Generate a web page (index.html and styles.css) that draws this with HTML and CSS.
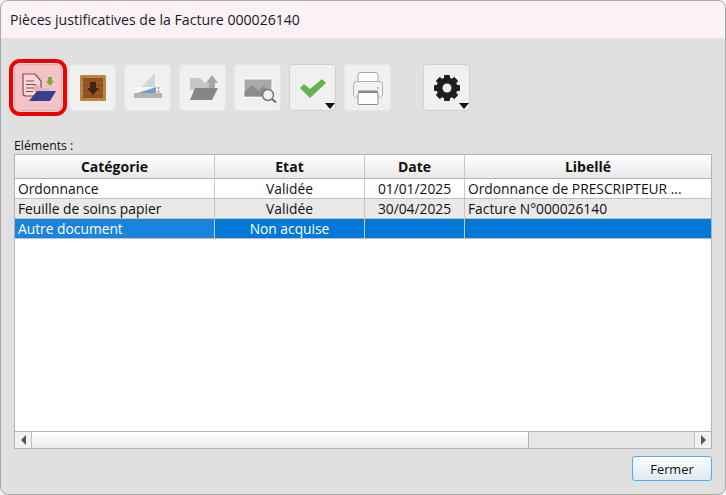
FILE: index.html
```html
<!DOCTYPE html>
<html lang="fr">
<head>
<meta charset="utf-8">
<title>Pièces justificatives</title>
<link rel="stylesheet" href="styles.css">
</head>
<body>
<div class="window">
  <header class="titlebar">Pièces justificatives de la Facture 000026140</header>
  <main class="content">
    <div class="toolbar">
      <button class="tool tool-active">
        <svg viewBox="0 0 47 47" width="47" height="47">
          <path d="M9 10h12l6 7v15H12a3 3 0 0 1-3-3z" fill="#fbd6d8" stroke="#7d4a55" stroke-width="1.2"/>
          <path d="M12 17h8M12 20.500h10M12 24h10M12 27.500h7" stroke="#7d4a55" stroke-width="1"/>
          <path d="M20 21h5l2 3h8v4H20z" fill="#e8b4b4"/>
          <path d="M23 27h19l-6 10H15z" fill="#3a3f8c"/>
          <path d="M34 13h4v4h2l-4 5-4-5h2z" fill="#82a83c"/>
        </svg>
      </button>
      <button class="tool">
        <svg viewBox="0 0 47 47" width="47" height="47">
          <rect x="11" y="11" width="26" height="26" rx="1.500" fill="#b98443"/>
          <rect x="14" y="14" width="20" height="20" fill="#8f4f1e"/>
          <path d="M14 19h20M14 24h20M14 29h20" stroke="#a3642e" stroke-width="1"/>
          <path d="M21 18h6v6h3l-6 7-6-7h3z" fill="#3f2410"/>
        </svg>
      </button>
      <button class="tool">
        <svg viewBox="0 0 47 47" width="47" height="47">
          <path d="M12 29 31 9v14z" fill="#d4d4d4"/>
          <path d="M12 25 14 23H38V34H10V27z" fill="#f6f6f6"/>
          <path d="M14 29 32 23v6z" fill="#6f9bd3"/>
          <rect x="10" y="29" width="28" height="5" fill="#b3b3b3"/>
          <rect x="33.500" y="23" width="2" height="2" fill="#7ec26b"/>
          <rect x="33.500" y="26.500" width="2" height="2" fill="#e0745c"/>
        </svg>
      </button>
      <button class="tool">
        <svg viewBox="0 0 47 47" width="47" height="47">
          <path d="M11 14h10l5 5h10v7H11z" fill="#c6c6c6"/>
          <path d="M16 24h23l-6 12H11z" fill="#858585"/>
          <path d="M27 19l6-8 6 8h-3v5h-6v-5z" fill="#a8a8a8"/>
        </svg>
      </button>
      <button class="tool">
        <svg viewBox="0 0 47 47" width="47" height="47">
          <rect x="9" y="14" width="30" height="20" fill="#fafafa"/>
          <rect x="10.500" y="15.500" width="27" height="17" fill="#a9a9a9"/>
          <path d="M10.500 32.500V28l7-7 7 6 5-5 8 7v3.500z" fill="#8c8c8c"/>
          <circle cx="34" cy="31" r="5.500" fill="#f0f0f0" stroke="#777" stroke-width="1.500"/>
          <path d="M38 35l4 3.500" stroke="#666" stroke-width="1.800"/>
        </svg>
      </button>
      <button class="tool tool-menu tool-enabled">
        <svg viewBox="0 0 47 47" width="47" height="47">
          <path d="M11 24l4-4 6 5 12-10 4 4-16 15z" fill="#62b34b"/>
        </svg>
      </button>
      <button class="tool">
        <svg viewBox="0 0 47 47" width="47" height="47">
          <rect x="14" y="8.500" width="20" height="12" rx="2" fill="#fbfbfb" stroke="#a5a5a5"/>
          <rect x="9.500" y="17.500" width="29" height="16" rx="3" fill="#f2f2f2" stroke="#b0b0b0"/>
          <rect x="14" y="28.500" width="20" height="12" rx="1" fill="#fdfdfd" stroke="#8e8e8e"/>
          <rect x="14" y="26.500" width="20" height="2" fill="#8a8a8a"/>
          <rect x="33" y="23" width="2" height="2" fill="#bdbdbd"/>
        </svg>
      </button>
      <button class="tool tool-gear tool-menu tool-enabled">
        <svg viewBox="0 0 47 47" width="47" height="47">
          <g fill="#1d1e22">
            <circle cx="24" cy="24" r="10.500"/>
            <rect x="21" y="11" width="6" height="26" rx="1"/>
            <rect x="11" y="21" width="26" height="6" rx="1"/>
            <rect x="21" y="11" width="6" height="26" rx="1" transform="rotate(45 24 24)"/>
            <rect x="11" y="21" width="26" height="6" rx="1" transform="rotate(45 24 24)"/>
          </g>
          <circle cx="24" cy="24" r="4.500" fill="#f0f0f0"/>
        </svg>
      </button>
    </div>
    <div class="list-label">Eléments :</div>
    <div class="list">
      <table class="grid">
        <colgroup>
          <col class="col-cat"><col class="col-etat"><col class="col-date"><col class="col-lib">
        </colgroup>
        <thead>
          <tr><th>Catégorie</th><th>Etat</th><th>Date</th><th>Libellé</th></tr>
        </thead>
        <tbody>
          <tr>
            <td>Ordonnance</td><td class="center">Validée</td><td class="center">01/01/2025</td><td>Ordonnance de PRESCRIPTEUR ...</td>
          </tr>
          <tr class="alt">
            <td>Feuille de soins papier</td><td class="center">Validée</td><td class="center">30/04/2025</td><td>Facture N°000026140</td>
          </tr>
          <tr class="selected">
            <td class="focus">Autre document</td><td class="center">Non acquise</td><td class="center"></td><td></td>
          </tr>
        </tbody>
      </table>
      <div class="scrollbar">
        <div class="sb-btn"><span class="arrow-left"></span></div>
        <div class="sb-thumb"></div>
        <div class="sb-track"></div>
        <div class="sb-btn sb-btn-end"><span class="arrow-right"></span></div>
      </div>
    </div>
    <div class="footer"><button class="close-btn">Fermer</button></div>
  </main>
</div>
</body>
</html>
```
FILE: styles.css
```css
* { box-sizing: border-box; }
html, body { margin: 0; height: 100%; }
body {
  background: #f4f0f4;
  font-family: "Open Sans", "Noto Sans", "Liberation Sans", sans-serif;
  font-size: 13px;
  color: #111;
  overflow: hidden;
}
.window {
  height: 495px;
  display: flex;
  flex-direction: column;
  background: #e0e0e0;
  border: 1px solid #a8a8a8;
  border-radius: 8px;
  margin: 0;
  overflow: hidden;
}
.titlebar {
  height: 37px;
  flex: none;
  background: #fbf2f7;
  padding: 9px 0 0 9px;
  font-size: 14.100px;
  line-height: 20px;
  color: #1a1a1a;
}
.content {
  flex: 1;
  display: flex;
  flex-direction: column;
  padding: 26px 13px 12px 13px;
  min-height: 0;
}
.toolbar { display: flex; gap: 8px; height: 47px; flex: none; }
.tool {
  position: relative;
  width: 47px;
  height: 47px;
  padding: 0;
  background: #f0f0f0;
  border: 1px solid #e6e6e6;
  border-radius: 4px;
  display: block;
}
.tool svg { display: block; margin: -1px; }
.tool-enabled { border-color: #cfcfcf; }
.tool-active {
  width: 48px;
  margin-right: -1px;
  background: #f5c3c5;
  border-color: #e6aeb0;
  outline: 4px solid #f00000;
  outline-offset: 1px;
  border-radius: 6px;
}
.tool-gear { margin-left: 24px; }
.tool-menu::after {
  content: "";
  position: absolute;
  right: 0;
  bottom: 1px;
  border-left: 5px solid transparent;
  border-right: 5px solid transparent;
  border-top: 6px solid #111;
}
.list-label {
  flex: none;
  margin-top: 27px;
  height: 16px;
  line-height: 16px;
  font-size: 12.300px;
}
.list {
  flex: none;
  width: 698px;
  height: 295px;
  display: flex;
  flex-direction: column;
  justify-content: space-between;
  background: #fff;
  border: 1px solid #b4b4b4;
}
.grid {
  width: 696px;
  table-layout: fixed;
  border-collapse: separate;
  border-spacing: 0;
}
.col-cat { width: 200px; }
.col-etat { width: 150px; }
.col-date { width: 100px; }
.grid th {
  height: 24px;
  padding: 0;
  font-size: 14px;
  font-weight: 700;
  text-align: center;
  background: linear-gradient(#ffffff, #e8e8e8);
  border-right: 1px solid #c8c8c8;
  border-bottom: 1px solid #b4b4b4;
}
.grid td {
  height: 20px;
  padding: 0 3px;
  font-size: 13.800px;
  line-height: 19px;
  white-space: nowrap;
  overflow: hidden;
  border-right: 1px solid #c8c8c8;
  border-bottom: 1px solid #c0c0c0;
}
.grid th:last-child, .grid td:last-child { border-right: 0; }
.grid .center { text-align: center; }
.alt td { background: #e9e9e9; }
.selected td { background: #0078d7; color: #fff; }
.selected .focus { background: #1a84dd; }
.scrollbar {
  height: 17px;
  display: flex;
  background: #e6e6e6;
  border-top: 1px solid #b4b4b4;
  flex: none;
}
.sb-btn {
  width: 17px;
  flex: none;
  display: flex;
  align-items: center;
  justify-content: center;
  background: #f2f2f2;
  border-right: 1px solid #c0c0c0;
}
.sb-btn-end { border-right: 0; border-left: 1px solid #c0c0c0; }
.sb-thumb {
  width: 497px;
  background: linear-gradient(#ffffff, #ececec);
  border-right: 1px solid #b8b8b8;
}
.sb-track { flex: 1; }
.arrow-left, .arrow-right {
  border-top: 5px solid transparent;
  border-bottom: 5px solid transparent;
}
.arrow-left { border-right: 5px solid #555; }
.arrow-right { border-left: 5px solid #555; }
.footer { flex: 1; display: flex; justify-content: flex-end; align-items: flex-start; padding-top: 7px; }
.close-btn {
  width: 80px;
  height: 25px;
  padding: 0;
  font-family: inherit;
  font-size: 12.800px;
  color: #111;
  background: linear-gradient(#fbfcfd, #e2e9f1);
  border: 1px solid #45aef5;
  border-radius: 3px;
}
```
